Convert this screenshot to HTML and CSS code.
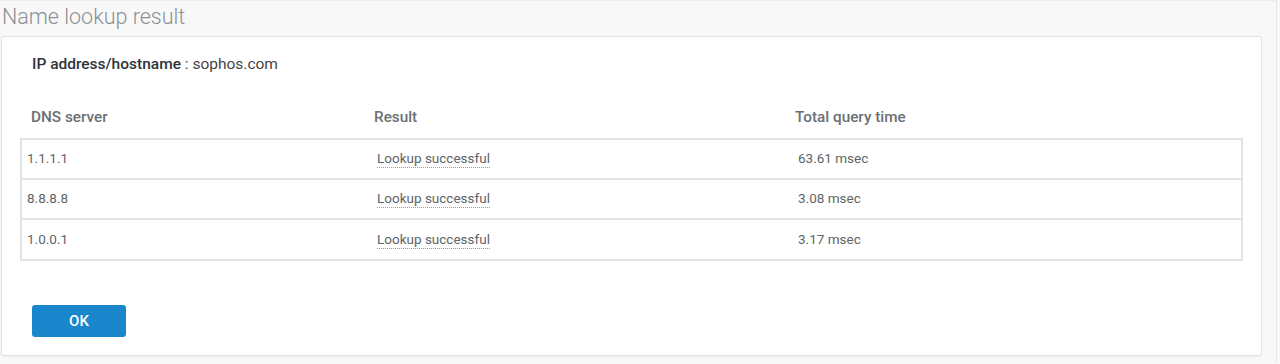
FILE: index.html
```html
<!DOCTYPE html>
<html>
<head>
<meta charset="utf-8">
<link rel="stylesheet" href="styles.css">
</head>
<body>
<div class="page">
  <h1 class="title">Name lookup result</h1>
  <div class="panel">
    <div class="host"><span class="host-label">IP address/hostname</span> : sophos.com</div>
    <div class="thead">
      <div>DNS server</div>
      <div>Result</div>
      <div>Total query time</div>
    </div>
    <div class="table">
      <div class="row">
        <div>1.1.1.1</div>
        <div><span class="result">Lookup successful</span></div>
        <div>63.61 msec</div>
      </div>
      <div class="row">
        <div>8.8.8.8</div>
        <div><span class="result">Lookup successful</span></div>
        <div>3.08 msec</div>
      </div>
      <div class="row">
        <div>1.0.0.1</div>
        <div><span class="result">Lookup successful</span></div>
        <div>3.17 msec</div>
      </div>
    </div>
    <div class="actions">
      <button class="btn">OK</button>
    </div>
  </div>
</div>
</body>
</html>
```
FILE: styles.css
```css
html, body {
  margin: 0;
  padding: 0;
  background: #f8f8f8;
  font-family: Roboto, "Liberation Sans", sans-serif;
}
.page {
  width: 1277px;
  height: 363px;
  border-top: 1px solid #ededed;
  border-right: 1px solid #e6e6e6;
  box-sizing: border-box;
}
.title {
  margin: 0;
  padding: 4px 0 0 2px;
  height: 35px;
  box-sizing: border-box;
  font-size: 21.5px;
  font-weight: 300;
  line-height: 24px;
  color: #8a9096;
}
.panel {
  margin-left: 1px;
  width: 1261px;
  height: 320px;
  box-sizing: border-box;
  background: #fff;
  border: 1px solid #e3e3e3;
  border-radius: 3px;
  box-shadow: 0 1px 1px rgba(0,0,0,0.04);
  padding: 17px 0 0 0;
}
.host {
  padding-left: 30px;
  font-size: 15.5px;
  line-height: 20px;
  color: #444;
}
.host-label {
  font-weight: 500;
  color: #2e3338;
}
.thead {
  margin: 33px 0 0 18px;
  padding-left: 11px;
  width: 1223px;
  box-sizing: border-box;
  display: grid;
  grid-template-columns: 343px 421px 1fr;
  font-size: 15.3px;
  font-weight: 500;
  line-height: 20px;
  color: #6b7075;
  padding-bottom: 11px;
}
.table {
  margin-left: 18px;
  width: 1223px;
  box-sizing: border-box;
  border: 2px solid #e1e4e7;
  border-bottom-width: 1px;
}
.row {
  display: grid;
  grid-template-columns: 348px 421px 1fr;
  height: 40px;
  align-items: center;
  padding-left: 5px;
  padding-bottom: 2px;
  font-size: 13.5px;
  color: #606468;
  border-bottom: 2px solid #e1e4e7;
  box-sizing: border-box;
}
.row:last-child {
  border-bottom: 1px solid #e1e4e7;
}
.row > div:nth-child(2),
.row > div:nth-child(3) {
  padding-left: 2px;
}
.result {
  border-bottom: 1px dotted #9a9a9a;
  padding-bottom: 1px;
}
.actions {
  padding: 44px 0 0 30px;
}
.btn {
  width: 94px;
  height: 32px;
  background: #1a86cc;
  border: none;
  border-radius: 3px;
  color: #fff;
  font-family: Roboto, "Liberation Sans", sans-serif;
  font-size: 15px;
  font-weight: 500;
  padding: 0;
}
```
